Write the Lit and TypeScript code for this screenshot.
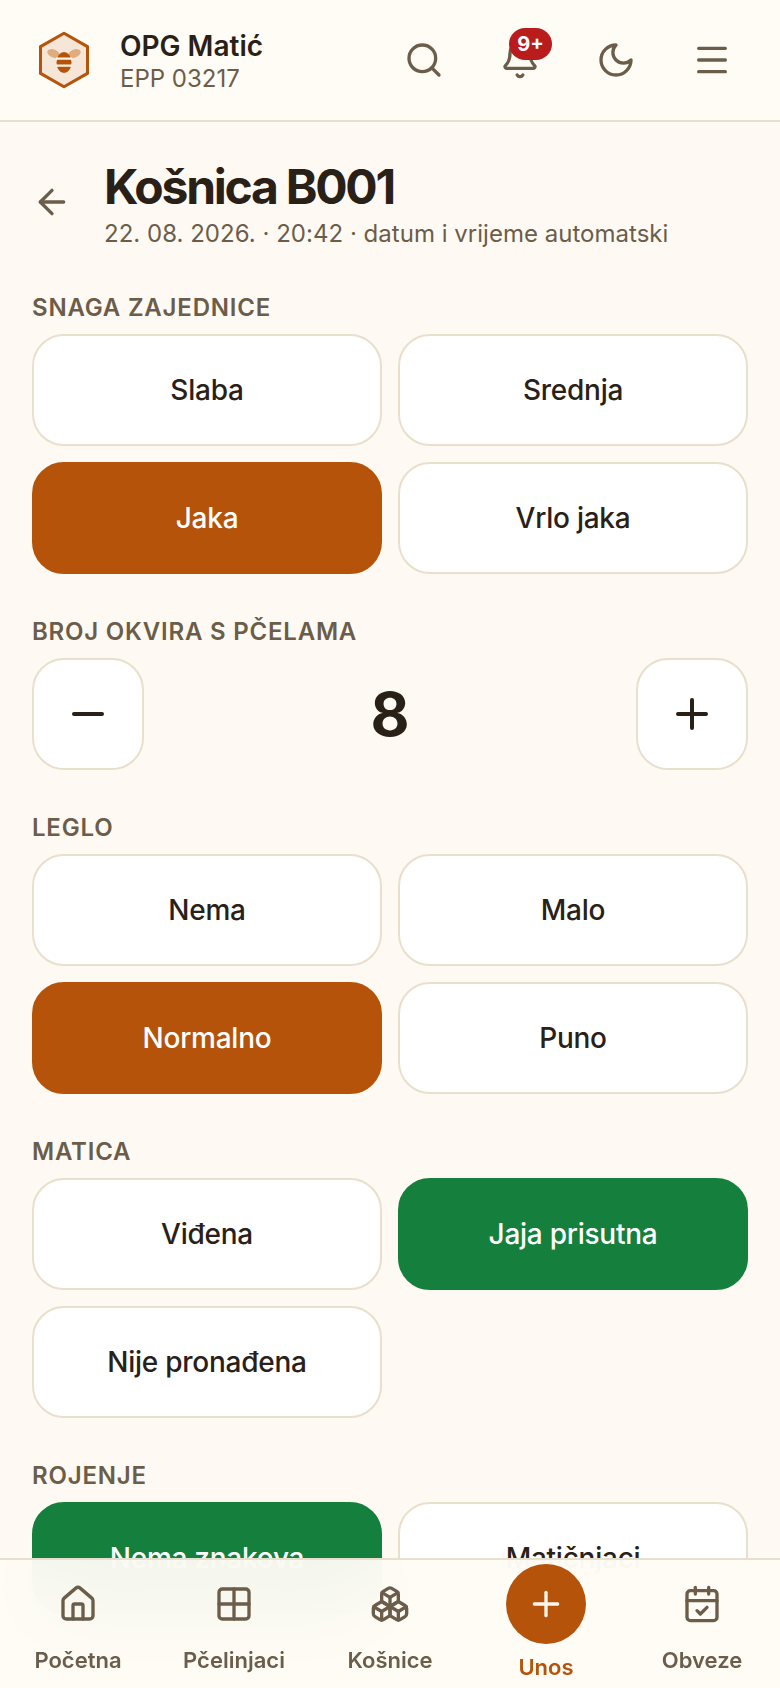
import { LitElement, html, css, svg } from "lit";
import { customElement } from "lit/decorators.js";
import { classMap } from "lit/directives/class-map.js";

type Tone = "amber" | "green";
interface Field {
  label: string;
  options: string[];
  selected: string;
  tone: Tone;
}

const strength: Field = { label: "SNAGA ZAJEDNICE", options: ["Slaba", "Srednja", "Jaka", "Vrlo jaka"], selected: "Jaka", tone: "amber" };
const brood: Field = { label: "LEGLO", options: ["Nema", "Malo", "Normalno", "Puno"], selected: "Normalno", tone: "amber" };
const queen: Field = { label: "MATICA", options: ["Viđena", "Jaja prisutna", "Nije pronađena"], selected: "Jaja prisutna", tone: "green" };
const swarm: Field = { label: "ROJENJE", options: ["Nema znakova", "Matičnjaci"], selected: "Nema znakova", tone: "green" };

const icon = (body: unknown, size = 40) => html`<svg
  class="icon"
  width=${size}
  height=${size}
  viewBox="0 0 24 24"
  fill="none"
  stroke="currentColor"
  stroke-width="2"
  stroke-linecap="round"
  stroke-linejoin="round"
>${body}</svg>`;

const icons = {
  search: svg`<circle cx="11" cy="11" r="8"/><path d="m21 21-4.3-4.3"/>`,
  bell: svg`<path d="M10.268 21a2 2 0 0 0 3.464 0"/><path d="M3.262 15.326A1 1 0 0 0 4 17h16a1 1 0 0 0 .74-1.673C19.41 13.956 18 12.499 18 8A6 6 0 0 0 6 8c0 4.499-1.411 5.956-2.738 7.326"/>`,
  moon: svg`<path d="M12 3a6 6 0 0 0 9 9 9 9 0 1 1-9-9Z"/>`,
  menu: svg`<path d="M4 5h16"/><path d="M4 12h16"/><path d="M4 19h16"/>`,
  back: svg`<path d="m12 19-7-7 7-7"/><path d="M19 12H5"/>`,
  minus: svg`<path d="M5 12h14"/>`,
  plus: svg`<path d="M5 12h14"/><path d="M12 5v14"/>`,
  home: svg`<path d="M15 21v-8a1 1 0 0 0-1-1h-4a1 1 0 0 0-1 1v8"/><path d="M3 10a2 2 0 0 1 .709-1.528l7-5.999a2 2 0 0 1 2.582 0l7 5.999A2 2 0 0 1 21 10v9a2 2 0 0 1-2 2H5a2 2 0 0 1-2-2z"/>`,
  apiaries: svg`<rect x="3" y="3" width="18" height="18" rx="2"/><path d="M3 12h18"/><path d="M12 3v18"/>`,
  hives: svg`<path d="M2.97 12.92A2 2 0 0 0 2 14.63v3.24a2 2 0 0 0 .97 1.71l3 1.8a2 2 0 0 0 2.06 0L12 19v-5.5l-5-3-4.03 2.42Z"/><path d="m7 16.5-4.74-2.85"/><path d="m7 16.5 5-3"/><path d="M7 16.5v5.17"/><path d="M12 13.5V19l3.97 2.38a2 2 0 0 0 2.06 0l3-1.8a2 2 0 0 0 .97-1.71v-3.24a2 2 0 0 0-.97-1.71L17 10.5l-5 3Z"/><path d="m17 16.5-5-3"/><path d="m17 16.5 4.74-2.85"/><path d="M17 16.5v5.17"/><path d="M7.97 4.42A2 2 0 0 0 7 6.13v4.37l5 3 5-3V6.13a2 2 0 0 0-.97-1.71l-3-1.8a2 2 0 0 0-2.06 0l-3 1.8Z"/><path d="M12 8 7.26 5.15"/><path d="m12 8 4.74-2.85"/><path d="M12 13.5V8"/>`,
  duties: svg`<path d="M8 2v4"/><path d="M16 2v4"/><rect x="3" y="4" width="18" height="18" rx="2"/><path d="M3 10h18"/><path d="m9 16 2 2 4-4"/>`,
};

@customElement("app-root")
export class AppRoot extends LitElement {
  static styles = css`
    :host {
      display: block;
      width: 780px;
      height: 1688px;
      font-family: Inter, "Noto Sans", sans-serif;
      color: #292118;
      background: #fefaf3;
    }
    .shell {
      position: relative;
      height: 1688px;
      overflow: hidden;
      display: flex;
      flex-direction: column;
    }
    .icon { display: block; }

    .top {
      flex: none;
      height: 122px;
      box-sizing: border-box;
      border-bottom: 2px solid #e8dfcc;
      background: #fffcf5;
      padding: 0 20px 0 32px;
      display: flex;
      align-items: center;
    }
    .brand { display: flex; align-items: center; gap: 24px; flex: 1; }
    .logo { display: block; }
    .names { padding-top: 3px; }
    .farm { font-size: 28px; line-height: 34px; font-weight: 600; }
    .code { font-size: 24px; line-height: 32px; color: #6b5d4a; }
    .actions { display: flex; color: #6b5d4a; }
    .action {
      position: relative;
      width: 96px;
      height: 88px;
      display: flex;
      align-items: center;
      justify-content: center;
    }
    .badge {
      position: absolute;
      left: 37px;
      top: 12px;
      height: 32px;
      width: 43px;
      border-radius: 16px;
      background: #b91c1c;
      color: #fff;
      font-size: 20px;
      font-weight: 700;
      line-height: 32px;
      text-align: center;
    }

    .page { padding: 35px 32px 0; }
    .title-row { display: flex; align-items: center; gap: 32px; margin-bottom: 39px; }
    h1 {
      margin: 0;
      font-size: 48px;
      line-height: 60px;
      font-weight: 700;
      letter-spacing: -0.047em;
    }
    .stamp { font-size: 24px; line-height: 34px; color: #6b5d4a; letter-spacing: 0.02px; }
    .back { color: #6b5d4a; margin-bottom: 4px; }

    .field { margin-bottom: 40px; }
    .label {
      font-size: 24px;
      line-height: 36px;
      font-weight: 600;
      letter-spacing: 0.033em;
      color: #6b5d4a;
      margin-bottom: 8px;
    }
    .choices { display: grid; grid-template-columns: 1fr 1fr; gap: 16px; }
    .choice, .step {
      box-sizing: border-box;
      height: 112px;
      border: 2px solid #e8dfcc;
      border-radius: 32px;
      background: #fff;
      color: #292118;
      font: 500 28px Inter, "Noto Sans", sans-serif;
      letter-spacing: -0.25px;
      display: flex;
      align-items: center;
      justify-content: center;
      padding: 0;
    }
    .choice.amber { background: #b45309; border-color: #b45309; color: #fff; }
    .choice.green { background: #15803d; border-color: #15803d; color: #fff; }
    .stepper { display: flex; align-items: center; }
    .step { width: 112px; flex: none; }
    .count {
      flex: 1;
      text-align: center;
      font-size: 60px;
      line-height: 72px;
      font-weight: 700;
    }

    .dock {
      position: absolute;
      left: 0;
      right: 0;
      bottom: 0;
      height: 130px;
      box-sizing: border-box;
      border-top: 2px solid #e8dfcc;
      background: rgba(255, 252, 245, 0.95);
      backdrop-filter: blur(40px);
      display: grid;
      grid-template-columns: repeat(5, 1fr);
    }
    .tab {
      display: flex;
      flex-direction: column;
      align-items: center;
      padding-top: 24px;
      color: #6b5d4a;
      font-size: 22px;
      font-weight: 600;
      line-height: 32px;
    }
    .tab .icon { margin-bottom: 20px; }
    .tab.add { padding-top: 4px; color: #b45309; }
    .fab {
      width: 80px;
      height: 80px;
      border-radius: 50%;
      background: #b45309;
      color: #fff7ed;
      display: flex;
      align-items: center;
      justify-content: center;
      margin-bottom: 7px;
    }
    .fab .icon { margin-bottom: 0; }
  `;

  private renderField(f: Field) {
    return html`<section class="field">
      <div class="label">${f.label}</div>
      <div class="choices">
        ${f.options.map((o) => {
          const on = o === f.selected;
          return html`<button class=${classMap({ choice: true, [f.tone]: on })}>${o}</button>`;
        })}
      </div>
    </section>`;
  }

  private renderTab(label: string, body: unknown) {
    return html`<div class="tab">${icon(body)}<span>${label}</span></div>`;
  }

  render() {
    return html`<div class="shell">
      <header class="top">
        <div class="brand">
          <svg class="logo" width="64" height="64" viewBox="0 0 64 64">
            <path d="M32 5.2 55.5 18.6V45.4L32 58.8 8.5 45.4V18.6Z" fill="#f5e6d8" stroke="#b45309" stroke-width="3" stroke-linejoin="round"/>
            <ellipse cx="21.5" cy="25.5" rx="6.5" ry="4" fill="#e0ab7d" transform="rotate(20 21.5 25.5)"/>
            <ellipse cx="42.5" cy="25.5" rx="6.5" ry="4" fill="#e0ab7d" transform="rotate(-20 42.5 25.5)"/>
            <ellipse cx="32" cy="34.5" rx="7.5" ry="10.5" fill="#b45309"/>
            <path d="M24 30.7H40M24 37.6H40" stroke="#fff6ea" stroke-width="2.3"/>
          </svg>
          <div class="names">
            <div class="farm">OPG Matić</div>
            <div class="code">EPP 03217</div>
          </div>
        </div>
        <div class="actions">
          <div class="action">${icon(icons.search)}</div>
          <div class="action">${icon(icons.bell)}<span class="badge">9+</span></div>
          <div class="action">${icon(icons.moon)}</div>
          <div class="action">${icon(icons.menu)}</div>
        </div>
      </header>

      <main class="page">
        <div class="title-row">
          <span class="back">${icon(icons.back)}</span>
          <div>
            <h1>Košnica B001</h1>
            <div class="stamp">22. 08. 2026. · 20:42 · datum i vrijeme automatski</div>
          </div>
        </div>
        ${this.renderField(strength)}
        <section class="field">
          <div class="label">BROJ OKVIRA S PČELAMA</div>
          <div class="stepper">
            <button class="step">${icon(icons.minus, 48)}</button>
            <div class="count">8</div>
            <button class="step">${icon(icons.plus, 48)}</button>
          </div>
        </section>
        ${this.renderField(brood)}
        ${this.renderField(queen)}
        ${this.renderField(swarm)}
      </main>

      <nav class="dock">
        ${this.renderTab("Početna", icons.home)}
        ${this.renderTab("Pčelinjaci", icons.apiaries)}
        ${this.renderTab("Košnice", icons.hives)}
        <div class="tab add"><div class="fab">${icon(icons.plus)}</div><span>Unos</span></div>
        ${this.renderTab("Obveze", icons.duties)}
      </nav>
    </div>`;
  }
}
